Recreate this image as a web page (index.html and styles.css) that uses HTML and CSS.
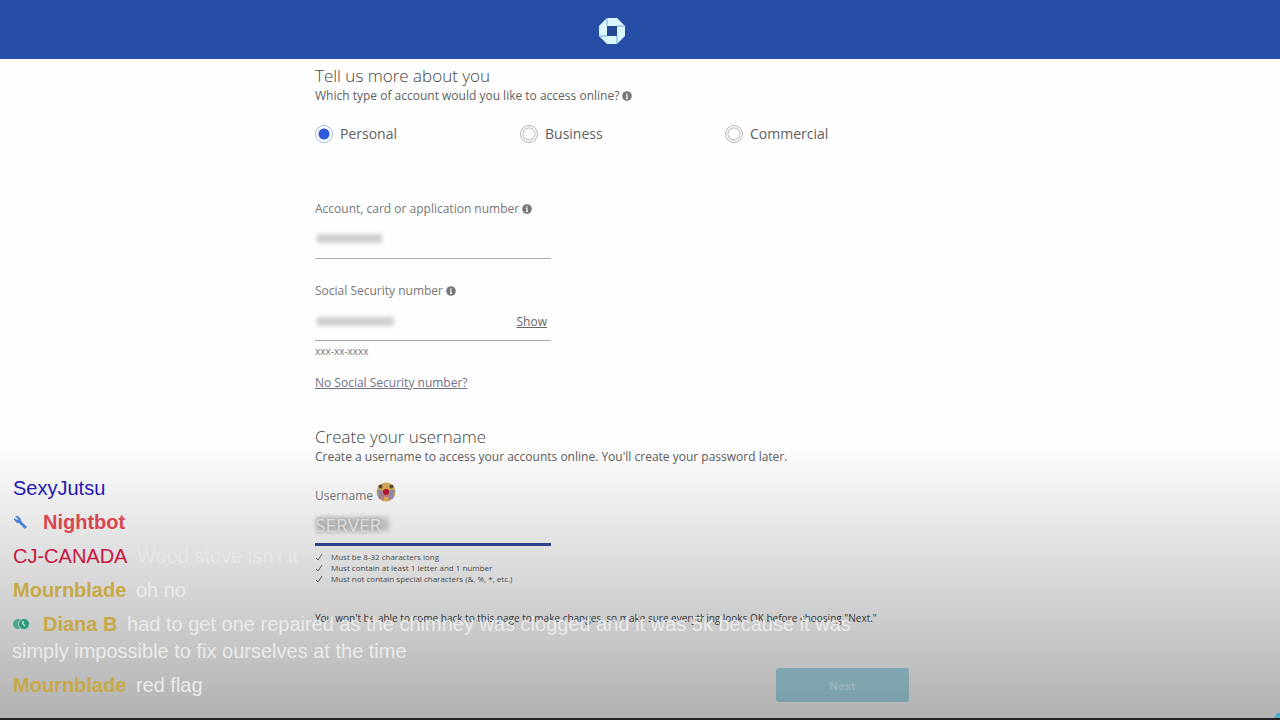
FILE: index.html
```html
<!DOCTYPE html>
<html lang="en">
<head>
<meta charset="utf-8">
<title>Tell us more about you</title>
<link rel="stylesheet" href="styles.css">
</head>
<body>
<svg class="defs" aria-hidden="true">
  <symbol id="info" viewBox="0 0 10 10"><circle cx="5" cy="5" r="4.8" fill="#777"/><path d="M5 4.3v3.2M5 2.2v1.2M4 4.4h1M4 7.5h2" stroke="#fff" stroke-width="1.2"/></symbol>
  <symbol id="check" viewBox="0 0 8 8"><path d="M1 5l2 2 4-6" fill="none" stroke="#666" stroke-width="1"/></symbol>
</svg>
<header class="topbar">
  <div class="column">
    <svg class="logo" viewBox="0 0 26 26" role="img" aria-label="Bank logo">
      <path d="M8 0h10l8 8v10l-8 8H8l-8-8V8z" fill="#d9f8ff"/>
      <path d="M8 8h10v10H8z" fill="#244a94"/>
      <path d="M8 0v8M26 8h-8M18 26v-8M0 18h8" stroke="#7fa6d6" stroke-width="1"/>
    </svg>
  </div>
</header>
<main class="column">
  <h2>Tell us more about you</h2>
  <p class="lead">Which type of account would you like to access online? <svg class="info"><use href="#info"/></svg></p>
  <div class="choices">
    <label><input type="radio" name="type" checked>Personal</label>
    <label><input type="radio" name="type">Business</label>
    <label><input type="radio" name="type">Commercial</label>
  </div>

  <div class="field">
    <label for="account">Account, card or application number <svg class="info"><use href="#info"/></svg></label>
    <div class="entry"><input id="account" type="text"><span class="smudge smudge-account"></span></div>
  </div>
  <div class="field">
    <label for="ssn">Social Security number <svg class="info"><use href="#info"/></svg></label>
    <div class="entry"><input id="ssn" type="text"><span class="smudge smudge-ssn"></span><button class="show" type="button">Show</button></div>
    <p class="hint">xxx-xx-xxxx</p>
  </div>
  <a class="no-ssn" href="#">No Social Security number?</a>

  <h2>Create your username</h2>
  <p class="lead">Create a username to access your accounts online. You'll create your password later.</p>
  <div class="field field-username">
    <label for="username">Username
      <svg class="emote" viewBox="0 0 20 20">
        <circle cx="10" cy="10" r="9.5" fill="#d9ac55"/>
        <path d="M1 8h5v9H3zM14 8h5l-2 9h-3z" fill="#9690ae"/>
        <path d="M6 8h8v10H6z" fill="#c58587"/>
        <circle cx="10" cy="10" r="3" fill="#b5172f"/>
        <circle cx="4.500" cy="4.500" r="2" fill="#5d4b38"/><circle cx="15.500" cy="4.500" r="2" fill="#5d4b38"/>
        <path d="M8 15h4v3H8z" fill="#e5b34b"/>
      </svg>
    </label>
    <div class="entry focused"><span class="smudge smudge-username"></span><input id="username" type="text" value="SERVER"></div>
    <ul class="rules">
      <li><svg><use href="#check"/></svg>Must be 8-32 characters long</li>
      <li><svg><use href="#check"/></svg>Must contain at least 1 letter and 1 number</li>
      <li><svg><use href="#check"/></svg>Must not contain special characters (&amp;, %, *, etc.)</li>
    </ul>
  </div>
  <p class="notice">You won't be able to come back to this page to make changes, so make sure everything looks OK before choosing "Next."</p>
  <div class="actions"><button class="next" type="button">Next</button></div>
</main>

<section class="chat" aria-label="Live chat">
  <ul>
    <li><span class="blue">SexyJutsu</span></li>
    <li><svg class="badge" viewBox="0 0 16 16"><path d="M2 2l3 0 3 3v2l6 6-2 2-6-6H4L1 6V4l3 2 1-1z" fill="#4d84d8"/></svg><b class="red">Nightbot</b></li>
    <li><span class="crimson">CJ-CANADA</span> <span class="faint">Wood stove isn't it</span></li>
    <li><b class="gold">Mournblade</b> <span class="soft">oh no</span></li>
    <li><svg class="badge" viewBox="0 0 16 16"><circle cx="5" cy="8" r="5" fill="#4fa58e"/><circle cx="11" cy="8" r="5.500" fill="#279b7b" stroke="#bcd0ca"/><path d="M10 5v3l2 2" fill="none" stroke="#c4ddd5" stroke-width="1.500"/></svg><b class="gold">Diana B</b> had to get one repaired as the chimney was clogged and it was 5k because it was simply impossible to fix ourselves at the time</li>
    <li><b class="gold">Mournblade</b> red flag</li>
  </ul>
  <svg class="corner" viewBox="0 0 6 6" aria-hidden="true"><path d="M0 6l3-5h3v5z" fill="#4fa9cc"/></svg>
</section>
</body>
</html>
```
FILE: styles.css
```css
* { box-sizing: border-box; }
body { margin: 0; min-height: 100vh; position: relative; background: #fefefe; color: #606060; font-family: "Open Sans", sans-serif; overflow-x: hidden; }
h2, p, ul { margin: 0; padding: 0; }
ul { list-style: none; }
input, button { font: inherit; }
.defs { position: absolute; width: 0; height: 0; }
.column { max-width: 650px; margin: 0 auto; padding-right: 56px; }
.topbar { background: #264ea6; height: 59px; padding-top: 18px; }
.logo { display: block; width: 26px; height: 26px; margin: 0 auto; }
main { padding-top: 5px; }
h2 { font-size: 17px; line-height: 24px; font-weight: 300; color: #444; }
.lead { font-size: 12px; line-height: 16px; }
.info { width: 10px; height: 10px; vertical-align: -1px; }

.choices { display: grid; grid-template-columns: 205px 205px auto; margin-top: 20px; font-size: 14px; line-height: 20px; }
.choices label { display: flex; align-items: center; gap: 7px; }
.choices input { appearance: none; width: 18px; height: 18px; margin: 0; border: 1px solid #b5b5b5; border-radius: 50%; background: radial-gradient(circle, #fff 5px, #bbb 6px, #fff 7px); }
.choices input:checked { border-color: #9dbbe0; background: radial-gradient(circle, #2f5bd7 5px, #fff 6px); }

.field { margin-top: 24px; font-size: 12px; line-height: 16px; color: #777; }
.choices + .field { margin-top: 57px; }
.field > label { display: block; }
.entry { position: relative; display: flex; align-items: center; width: 236px; height: 42px; padding-top: 5px; border-bottom: 1px solid #aaa; }
.entry input { flex: 1; min-width: 0; border: 0; padding: 0; background: none; outline: none; }
.smudge { position: absolute; background: #cfcfcf; filter: blur(2px); }
.smudge-account { left: 2px; top: 17px; width: 65px; height: 9px; }
.smudge-ssn { left: 2px; top: 18px; width: 77px; height: 9px; }
.smudge-username { left: 1px; top: 13px; width: 73px; height: 14px; background: #d2d2d2; }
.show { border: 0; padding: 0 4px; background: none; color: #666; font-size: 12px; text-decoration: underline; }
.hint { margin-top: 4px; font-size: 10px; line-height: 12px; }
.no-ssn { display: block; width: max-content; margin: 18px 0 34px; font-size: 12px; line-height: 16px; color: #727286; }

.field-username { margin-top: 23px; }
.emote { width: 20px; height: 20px; margin: -8px 0 -2px; vertical-align: 0; }
.focused { padding-top: 3px; border-bottom: 3px solid #32499b; }
.focused input { position: relative; color: #f2f2f2; font-size: 19px; text-shadow: 0 0 4px #999; }
.rules { margin-top: 5px; font-size: 8px; line-height: 11px; color: #555; }
.rules li { display: flex; align-items: center; gap: 8px; }
.rules svg { width: 8px; height: 8px; }
.notice { margin-top: 26px; font-size: 10px; line-height: 16px; color: #444; }
.actions { margin-top: 42px; text-align: right; }
.next { width: 133px; height: 34px; border: 0; border-radius: 3px; background: #abdfec; color: #d2f3fc; font-size: 11px; font-weight: 700; }

.chat { position: absolute; inset: auto 0 0; height: 280px; display: flex; flex-direction: column; justify-content: flex-end; padding: 0 0 19px 12px; border-bottom: 2px solid #222; background: linear-gradient(rgba(0, 0, 0, 0), rgba(0, 0, 0, .3)); pointer-events: none; }
.chat ul { display: grid; gap: 7px; max-width: 850px; color: #eaeaea; font-family: "Liberation Sans", sans-serif; font-size: 20px; line-height: 27px; }
.chat span, .chat b { margin: 0 4px 0 1px; }
.badge { width: 18px; height: 16px; margin-right: 12px; vertical-align: -1px; }
.corner { position: absolute; right: 0; bottom: 0; width: 6px; height: 6px; }
.blue { color: #2516b5; }
.red { color: #d94650; }
.crimson { color: #c9143f; }
.gold { color: #c8a947; }
.chat .faint { color: #e6e6e6; margin: 0; }
.chat .soft { color: #ebebeb; margin: 0; }
```
